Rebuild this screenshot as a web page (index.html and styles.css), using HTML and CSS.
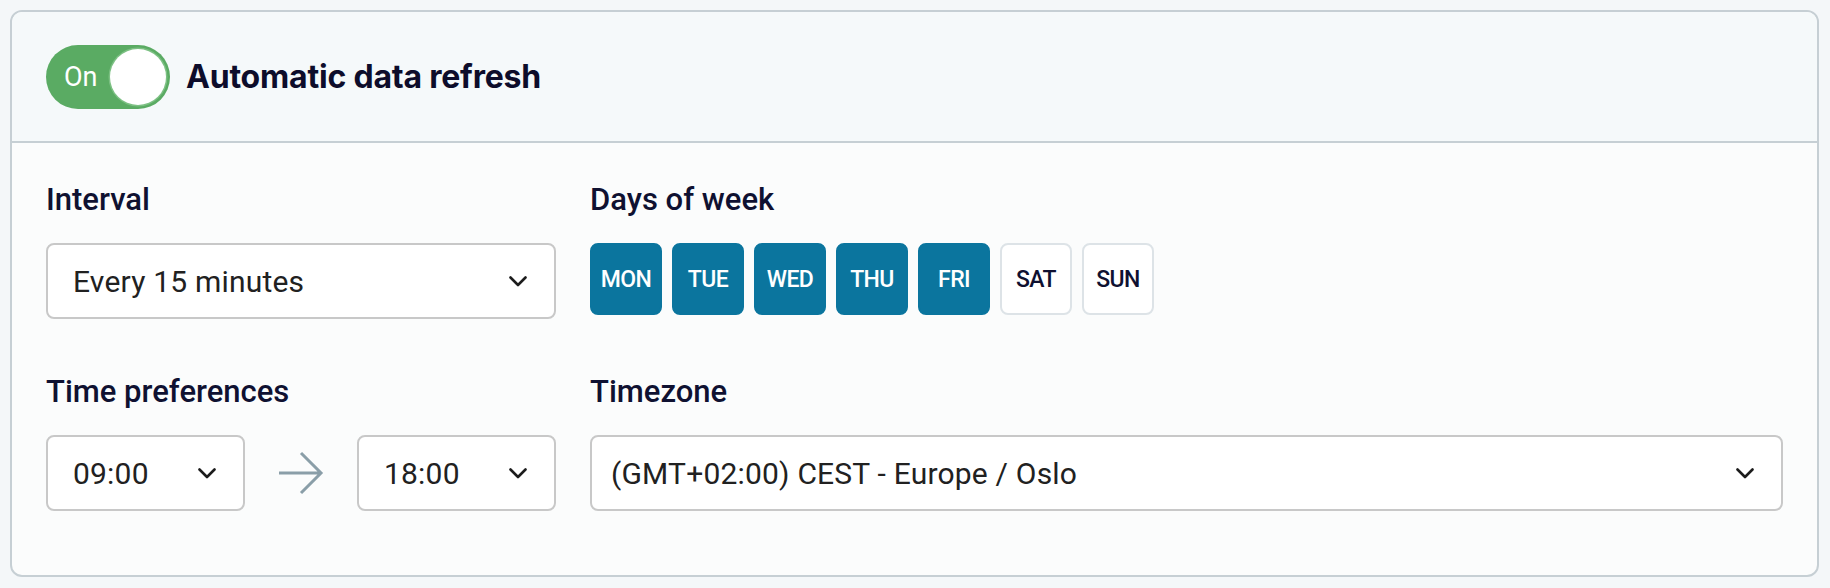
FILE: index.html
```html
<!DOCTYPE html>
<html lang="en">
<head>
<meta charset="utf-8">
<title>Automatic data refresh</title>
<link rel="stylesheet" href="styles.css">
</head>
<body>
<div class="card">
  <div class="card-header">
    <div class="toggle">
      <span class="toggle-label">On</span>
      <span class="toggle-knob"></span>
    </div>
    <h2 class="title">Automatic data refresh</h2>
  </div>
  <div class="card-body">
    <div class="field">
      <div class="label">Interval</div>
      <div class="select">
        <span class="select-value">Every 15 minutes</span>
        <svg class="chevron" viewBox="0 0 18 11" width="18" height="11"><path d="M1.5 1.5 L9 9 L16.5 1.5" fill="none" stroke="#1c1c1c" stroke-width="2.6" stroke-linecap="round" stroke-linejoin="round"/></svg>
      </div>
    </div>
    <div class="field">
      <div class="label">Days of week</div>
      <div class="days">
        <span class="day day-on">MON</span>
        <span class="day day-on">TUE</span>
        <span class="day day-on">WED</span>
        <span class="day day-on">THU</span>
        <span class="day day-on">FRI</span>
        <span class="day">SAT</span>
        <span class="day">SUN</span>
      </div>
    </div>
    <div class="field">
      <div class="label">Time preferences</div>
      <div class="time-row">
        <div class="select select-time">
          <span class="select-value">09:00</span>
          <svg class="chevron" viewBox="0 0 18 11" width="18" height="11"><path d="M1.5 1.5 L9 9 L16.5 1.5" fill="none" stroke="#1c1c1c" stroke-width="2.6" stroke-linecap="round" stroke-linejoin="round"/></svg>
        </div>
        <svg class="arrow" viewBox="0 0 46 44" width="46" height="44"><path d="M1 22 H43 M23 2 L43 22 L23 42" fill="none" stroke="#8a9ea8" stroke-width="3"/></svg>
        <div class="select select-time">
          <span class="select-value">18:00</span>
          <svg class="chevron" viewBox="0 0 18 11" width="18" height="11"><path d="M1.5 1.5 L9 9 L16.5 1.5" fill="none" stroke="#1c1c1c" stroke-width="2.6" stroke-linecap="round" stroke-linejoin="round"/></svg>
        </div>
      </div>
    </div>
    <div class="field">
      <div class="label">Timezone</div>
      <div class="select select-tz">
        <span class="select-value">(GMT+02:00) CEST - Europe / Oslo</span>
        <svg class="chevron" viewBox="0 0 18 11" width="18" height="11"><path d="M1.5 1.5 L9 9 L16.5 1.5" fill="none" stroke="#1c1c1c" stroke-width="2.6" stroke-linecap="round" stroke-linejoin="round"/></svg>
      </div>
    </div>
  </div>
</div>
</body>
</html>
```

FILE: styles.css
```css
* { box-sizing: border-box; }

html, body {
  margin: 0;
  background: #f4f7f9;
}

body {
  padding: 10px 11px 11px 10px;
  font-family: Roboto, "Liberation Sans", sans-serif;
}

.card {
  border: 2px solid #c6cfd4;
  border-radius: 12px;
  background: #fbfcfc;
  overflow: hidden;
}

.card-header {
  height: 131px;
  display: flex;
  align-items: center;
  gap: 16px;
  padding: 0 34px;
  background: #f5f9fa;
  border-bottom: 2px solid #c6cfd4;
}

.toggle {
  width: 124px;
  height: 64px;
  border-radius: 32px;
  background: #5aab63;
  display: flex;
  align-items: center;
  justify-content: space-between;
  padding: 0 4px 0 18px;
}

.toggle-label {
  color: #ffffff;
  font-size: 27px;
  font-weight: 400;
}

.toggle-knob {
  width: 56px;
  height: 56px;
  border-radius: 50%;
  background: #ffffff;
  box-shadow: 0 0 0 1.5px #7cc083;
}

.title {
  margin: 0;
  font-family: Inter, Roboto, sans-serif;
  font-size: 32px;
  font-weight: 700;
  color: #0d0d2b;
  letter-spacing: -0.2px;
}

.card-body {
  display: grid;
  grid-template-columns: 510px 1fr;
  column-gap: 34px;
  row-gap: 55px;
  padding: 39px 34px 64px 34px;
}

.label {
  font-size: 31px;
  line-height: 36px;
  font-weight: 500;
  color: #0f1131;
  margin-bottom: 25px;
}

.select {
  height: 76px;
  display: flex;
  align-items: center;
  justify-content: space-between;
  padding: 0 27px 0 25px;
  background: #ffffff;
  border: 2px solid #c8c8c8;
  border-radius: 8px;
}

.select-tz {
  padding-left: 19px;
}

.select-value {
  font-size: 30px;
  color: #212121;
  letter-spacing: 0.2px;
}

.chevron {
  display: block;
  flex: none;
}

.days {
  display: flex;
  gap: 10px;
}

.day {
  width: 72px;
  height: 72px;
  display: flex;
  align-items: center;
  justify-content: center;
  border: 2px solid #dde3e7;
  border-radius: 8px;
  background: #ffffff;
  color: #0f1131;
  font-size: 23px;
  font-weight: 500;
  letter-spacing: -0.6px;
}

.day-on {
  background: #0b759e;
  border-color: #0b759e;
  color: #ffffff;
}

.time-row {
  display: flex;
  align-items: center;
  justify-content: space-between;
}

.select-time {
  width: 199px;
}

.arrow {
  display: block;
}
```
